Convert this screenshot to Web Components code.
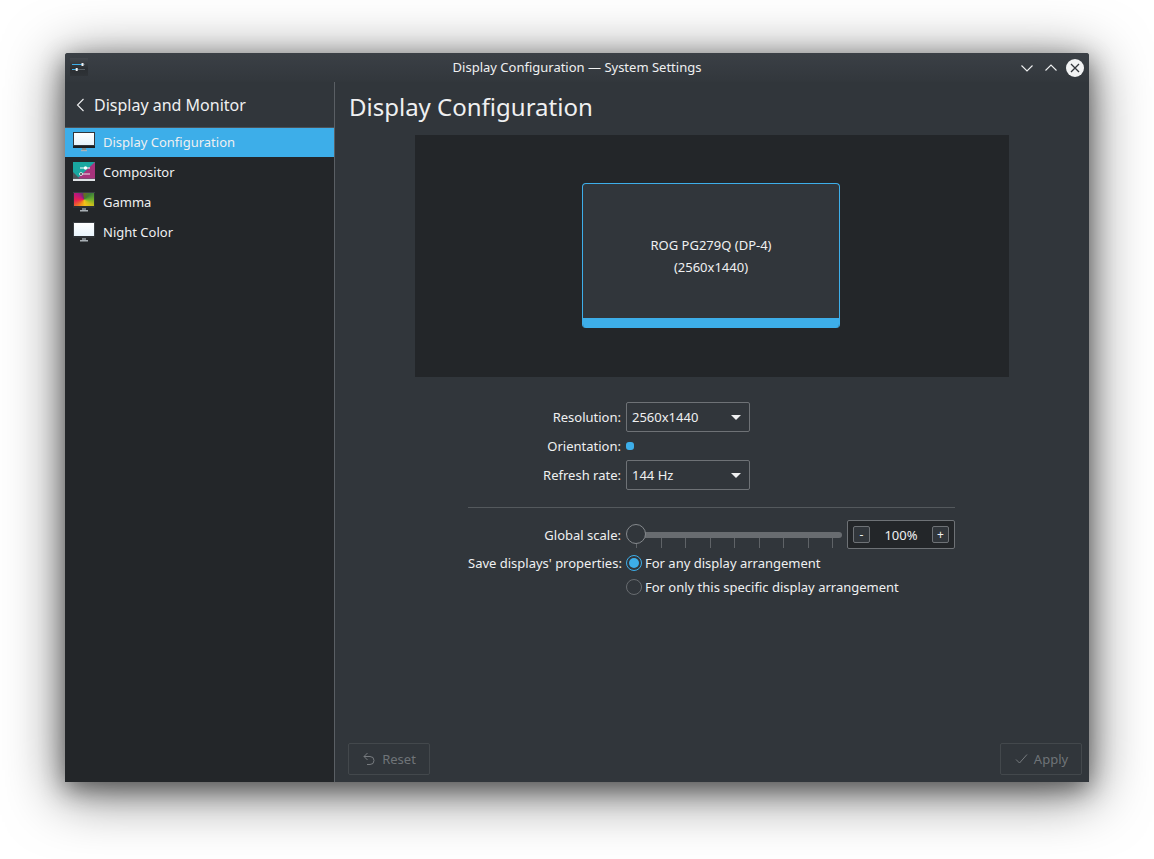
<!DOCTYPE html>
<html><head><meta charset="utf-8"><title>Display Configuration — System Settings</title>
<style>
html,body{margin:0;background:#fff;height:859px;overflow:hidden}
body{padding:53px 65px 0;box-sizing:border-box;font:13px "Noto Sans",sans-serif;color:#eff0f1}
</style></head><body>
<kde-window>
  <kde-titlebar slot="title">Display Configuration — System Settings</kde-titlebar>
  <kde-sidebar slot="side" heading="Display and Monitor">
    <side-item icon="display" selected>Display Configuration</side-item>
    <side-item icon="compositor">Compositor</side-item>
    <side-item icon="gamma">Gamma</side-item>
    <side-item icon="night">Night Color</side-item>
  </kde-sidebar>
  <kde-page slot="main" heading="Display Configuration">
    <monitor-preview name="ROG PG279Q (DP-4)" mode="(2560x1440)"></monitor-preview>
    <kde-form>
      <form-row label="Resolution:" h="30"><kde-combo>2560x1440</kde-combo></form-row>
      <form-row label="Orientation:" h="28"><orient-dot></orient-dot></form-row>
      <form-row label="Refresh rate:" h="30"><kde-combo>144 Hz</kde-combo></form-row>
      <form-sep></form-sep>
      <form-row label="Global scale:" h="29" mb="2"><scale-control></scale-control></form-row>
      <form-row label="Save displays' properties:" h="24"><kde-radio checked>For any display arrangement</kde-radio></form-row>
      <form-row label="" h="24"><kde-radio>For only this specific display arrangement</kde-radio></form-row>
    </kde-form>
    <kde-button slot="left" icon="reset">Reset</kde-button>
    <kde-button slot="right" icon="apply">Apply</kde-button>
  </kde-page>
</kde-window>
<script>
function def(name, css, html){
  customElements.define(name, class extends HTMLElement{
    constructor(){super();const s=this.attachShadow({mode:'open'});
      const a={};for(const x of this.getAttributeNames())a[x]=this.getAttribute(x);
      s.innerHTML='<style>'+css+'</style>'+(typeof html==='function'?html(a):html);}
  });
}
const stand=`<rect x="9" y="16" width="4" height="2" fill="#767e83"/><rect x="7" y="18" width="8" height="1.5" fill="#a9b0b5"/>`;
const ICONS={
display:`<svg width="22" height="20" viewBox="0 0 22 20"><defs><linearGradient id="a" x1="0" y1="0" x2="0" y2="1"><stop offset="0" stop-color="#fff"/><stop offset="1" stop-color="#e6f3fb"/></linearGradient></defs>
<rect width="22" height="16" fill="#31363b"/><rect x="1" y="1" width="20" height="12" fill="url(#a)"/><rect y="14" width="22" height="2" fill="#1b1e20"/><rect x="9" y="16" width="4" height="2" fill="#7f8c8d"/><rect x="8" y="18" width="6" height="1.2" fill="#aab3b8"/></svg>`,
compositor:`<svg width="22" height="20" viewBox="0 0 22 20"><rect width="22" height="17" fill="#1aa7a0"/><path d="M22 0V17H4L22 0Z" fill="#a8337c"/><path d="M0 17V10L7 17Z" fill="#4d5459"/><path d="M0 16.5h22V17H0Z" fill="#5a6166"/><rect y="17" width="22" height="2" fill="#dfe3e6"/><rect x="7" y="5.5" width="10" height="1" fill="#fff"/><circle cx="12.5" cy="6" r="1.7" fill="#fff"/><rect x="8" y="11.5" width="9" height="1" fill="#e8e8e8"/><circle cx="8" cy="12" r="1.5" fill="#31363b" stroke="#fff" stroke-width=".8"/></svg>`,
gamma:`<svg width="22" height="20" viewBox="0 0 22 20"><rect width="22" height="16" fill="#2b2f33"/><rect y="0" width="22" height="1" fill="#3a3f44"/><foreignObject x="1" y="1" width="20" height="13"><div xmlns="http://www.w3.org/1999/xhtml" style="width:20px;height:13px;background:conic-gradient(#6b6a1e 0deg,#3c7d3a 50deg,#6fae2c 90deg,#c8bf1c 125deg,#f4c21a 170deg,#f18a1c 215deg,#e8214f 265deg,#b3177f 310deg,#6a2f6e 345deg,#6b6a1e 360deg)"></div></foreignObject>${stand}</svg>`,
night:`<svg width="22" height="20" viewBox="0 0 22 20"><defs><linearGradient id="n" x1="0" y1="0" x2="0" y2="1"><stop offset="0" stop-color="#fff"/><stop offset="1" stop-color="#e8f4fc"/></linearGradient></defs>
<rect width="22" height="16" fill="#3a3f44"/><rect y="14" width="22" height="2" fill="#2b2f33"/><rect x="1" y="1" width="20" height="13" fill="url(#n)"/>${stand}</svg>`
};
def('kde-window',`:host{display:grid;width:1024px;height:729px;grid-template-rows:29px 1fr;grid-template-columns:270px 1fr;background:#31363b;border-radius:3px 3px 0 0;box-shadow:0 7px 24px rgba(0,0,0,.45),0 10px 56px 4px rgba(0,0,0,.52)}
::slotted([slot=title]){grid-column:1/3}`,
`<slot name="title"></slot><slot name="side"></slot><slot name="main"></slot>`);
def('kde-titlebar',`:host{display:flex;align-items:center;position:relative;background:linear-gradient(#3b4046,#32373c);border-radius:3px 3px 0 0;font:13px "Noto Sans",sans-serif;color:#eff0f1}
.ic{margin:5px 0 6px 5px;flex:none;display:block}
.t{position:absolute;left:0;right:0;top:5px;text-align:center;line-height:18px}
.b{margin-left:auto;display:flex;align-items:center;gap:6px;padding-right:5px;position:relative}`,
`<svg class="ic" width="18" height="18" viewBox="0 0 18 18"><defs><linearGradient id="ti" x1="0" y1="0" x2="0" y2="1"><stop offset="0" stop-color="#42474d"/><stop offset=".6" stop-color="#2a2e32"/><stop offset="1" stop-color="#2f3337"/></linearGradient></defs><rect width="18" height="18" fill="url(#ti)"/><rect x="2" y="6" width="13" height="1" fill="#596066"/><rect x="2" y="6" width="10" height="1" fill="#3daee9"/><rect x="11.5" y="5" width="2" height="3" fill="#eff0f1"/><rect x="2" y="11" width="13" height="1" fill="#596066"/><rect x="2" y="11" width="5" height="1" fill="#3daee9"/><rect x="5.7" y="10" width="2" height="3" fill="#eff0f1"/></svg>
<div class="t"><slot></slot></div>
<div class="b"><svg width="18" height="18" viewBox="0 0 18 18"><path d="M3.5 6.5L9 12l5.5-5.5" fill="none" stroke="#eff0f1" stroke-width="1.1"/></svg><svg width="18" height="18" viewBox="0 0 18 18"><path d="M3.5 11.5L9 6l5.5 5.5" fill="none" stroke="#eff0f1" stroke-width="1.1"/></svg><svg width="18" height="18" viewBox="0 0 18 18"><circle cx="9" cy="9" r="9" fill="#f2f3f4"/><path d="M5 5l8 8M13 5l-8 8" stroke="#31363b" stroke-width="1.3"/></svg></div>`);
def('kde-sidebar',`:host{display:flex;flex-direction:column;background:#232629;border-right:1px solid #5a5f64;min-height:0}
.h{height:45px;display:flex;align-items:center;background:#31363b;font-size:16px}
.h svg{margin:0 9px 0 11px;flex:none}`,
a=>`<div class="h"><svg width="9" height="14" viewBox="0 0 9 14"><path d="M7.5 1L1.5 7l6 6" fill="none" stroke="#eff0f1" stroke-width="1.1"/></svg><span>${a.heading}</span></div><slot></slot>`);
def('side-item',`:host{display:flex;height:30px;align-items:center;padding-left:8px;box-sizing:border-box}
:host([selected]){background:#3daee9;box-shadow:inset 0 1px 0 #4d5257}
svg{display:block}.i{width:22px;height:20px;margin-right:8px;flex:none}`,
a=>`<div class="i">${ICONS[a.icon]}</div><span><slot></slot></span>`);
def('kde-page',`:host{display:flex;flex-direction:column;min-width:0;min-height:0}
h1{font:400 24px/32px "Noto Sans",sans-serif;margin:9px 0 0 14px;height:44px;color:#eff0f1}
.c{display:flex;flex-direction:column;align-items:center;flex:1}
.f{display:flex;justify-content:space-between;padding:0 7px 7px 13px}`,
a=>`<h1>${a.heading}</h1><div class="c"><slot></slot></div><div class="f"><slot name="left"></slot><slot name="right"></slot></div>`);
def('monitor-preview',`:host{display:flex;align-items:flex-start;justify-content:center;width:594px;height:242px;background:#232629;padding:48px 2px 0 0;box-sizing:border-box}
.m{width:258px;height:145px;box-sizing:border-box;border:1px solid #3daee9;border-bottom:0;border-radius:4px;display:flex;flex-direction:column;background:#31363b;overflow:hidden}
.t{flex:1;display:flex;flex-direction:column;align-items:center;justify-content:center;line-height:22px;padding-top:10px}
.b{height:10px;background:#3daee9;flex:none}`,
a=>`<div class="m"><div class="t"><div>${a.name}</div><div>${a.mode}</div></div><div class="b"></div></div>`);
def('kde-form',`:host{display:block;width:487px;margin:25px 1px 0 0}`,`<slot></slot>`);
def('form-row',`:host{display:grid;grid-template-columns:153px 1fr;column-gap:5px;align-items:center}
.l{text-align:right;white-space:nowrap}`,
a=>`<style>:host{height:${a.h}px;margin-bottom:${a.mb||0}px}</style><div class="l">${a.label}</div><div class="v"><slot></slot></div>`);
def('form-sep',`:host{display:block;height:1px;background:#54595d;margin:17px 0 12px}`,``);
def('orient-dot',`:host{display:block;width:8px;height:8px;background:#3daee9;border-radius:3px}`,``);
def('kde-combo',`:host{display:flex;align-items:center;justify-content:space-between;width:124px;height:30px;box-sizing:border-box;border:1px solid #6e7276;border-radius:2px;padding:0 8px 0 5px;background:#31363b}
.a{width:0;height:0;border:5px solid transparent;border-top:5px solid #eff0f1;border-bottom:0}`,
`<span><slot></slot></span><span class="a"></span>`);
def('scale-control',`:host{display:flex;align-items:flex-start;gap:5px;height:29px}
.s{position:relative;width:216px;height:29px;flex:none}
.tr{position:absolute;left:8px;right:0;top:12px;height:6px;border-radius:3px;background:#686c70}
.k{position:absolute;left:0;top:4px;width:20px;height:20px;box-sizing:border-box;border:1px solid #85898d;border-radius:50%;background:#31363b}
.tk{position:absolute;top:18px;left:10px;width:197px;height:10px;display:flex;justify-content:space-between}
.tk i{width:1px;height:10px;background:#5f6367;display:block}
.sp{width:108px;height:29px;box-sizing:border-box;border:1px solid #6e7276;border-radius:2px;background:#232629;display:flex;align-items:center;justify-content:space-between;padding:0 5px}
.bt{width:17px;height:17px;box-sizing:border-box;border:1px solid #6e7276;border-radius:2px;background:#31363b;display:flex;align-items:center;justify-content:center;font-size:12px;line-height:1}`,
`<div class="s"><div class="tk">${'<i></i>'.repeat(9)}</div><div class="tr"></div><div class="k"></div></div><div class="sp"><span class="bt">-</span><span>100%</span><span class="bt">+</span></div>`);
def('kde-radio',`:host{display:flex;align-items:center;gap:3px;white-space:nowrap}
.r{width:16px;height:16px;box-sizing:border-box;border:1px solid #686c70;border-radius:50%;display:flex;align-items:center;justify-content:center;flex:none}
:host([checked]) .r{border-color:#3daee9}
:host([checked]) .r i{display:block;width:10px;height:10px;border-radius:50%;background:#3daee9}`,
`<span class="r"><i></i></span><span><slot></slot></span>`);
def('kde-button',`:host{display:flex;align-items:center;justify-content:center;gap:6px;width:82px;height:32px;box-sizing:border-box;border:1px solid #43484c;border-radius:2px;color:#6f7478}
svg{flex:none}`,
a=>(a.icon==='reset'
 ?`<svg width="14" height="14" viewBox="0 0 14 14"><path d="M5.5 1L2 4.5 5.5 8M2 4.5h6a4 4 0 0 1 0 8H5" fill="none" stroke="#777b7f" stroke-width="1"/></svg>`
 :`<svg width="14" height="12" viewBox="0 0 14 12"><path d="M2 6.5L5.5 10 13 1.5" fill="none" stroke="#777b7f" stroke-width="1"/></svg>`)+`<span><slot></slot></span>`);
</script>
</body></html>
